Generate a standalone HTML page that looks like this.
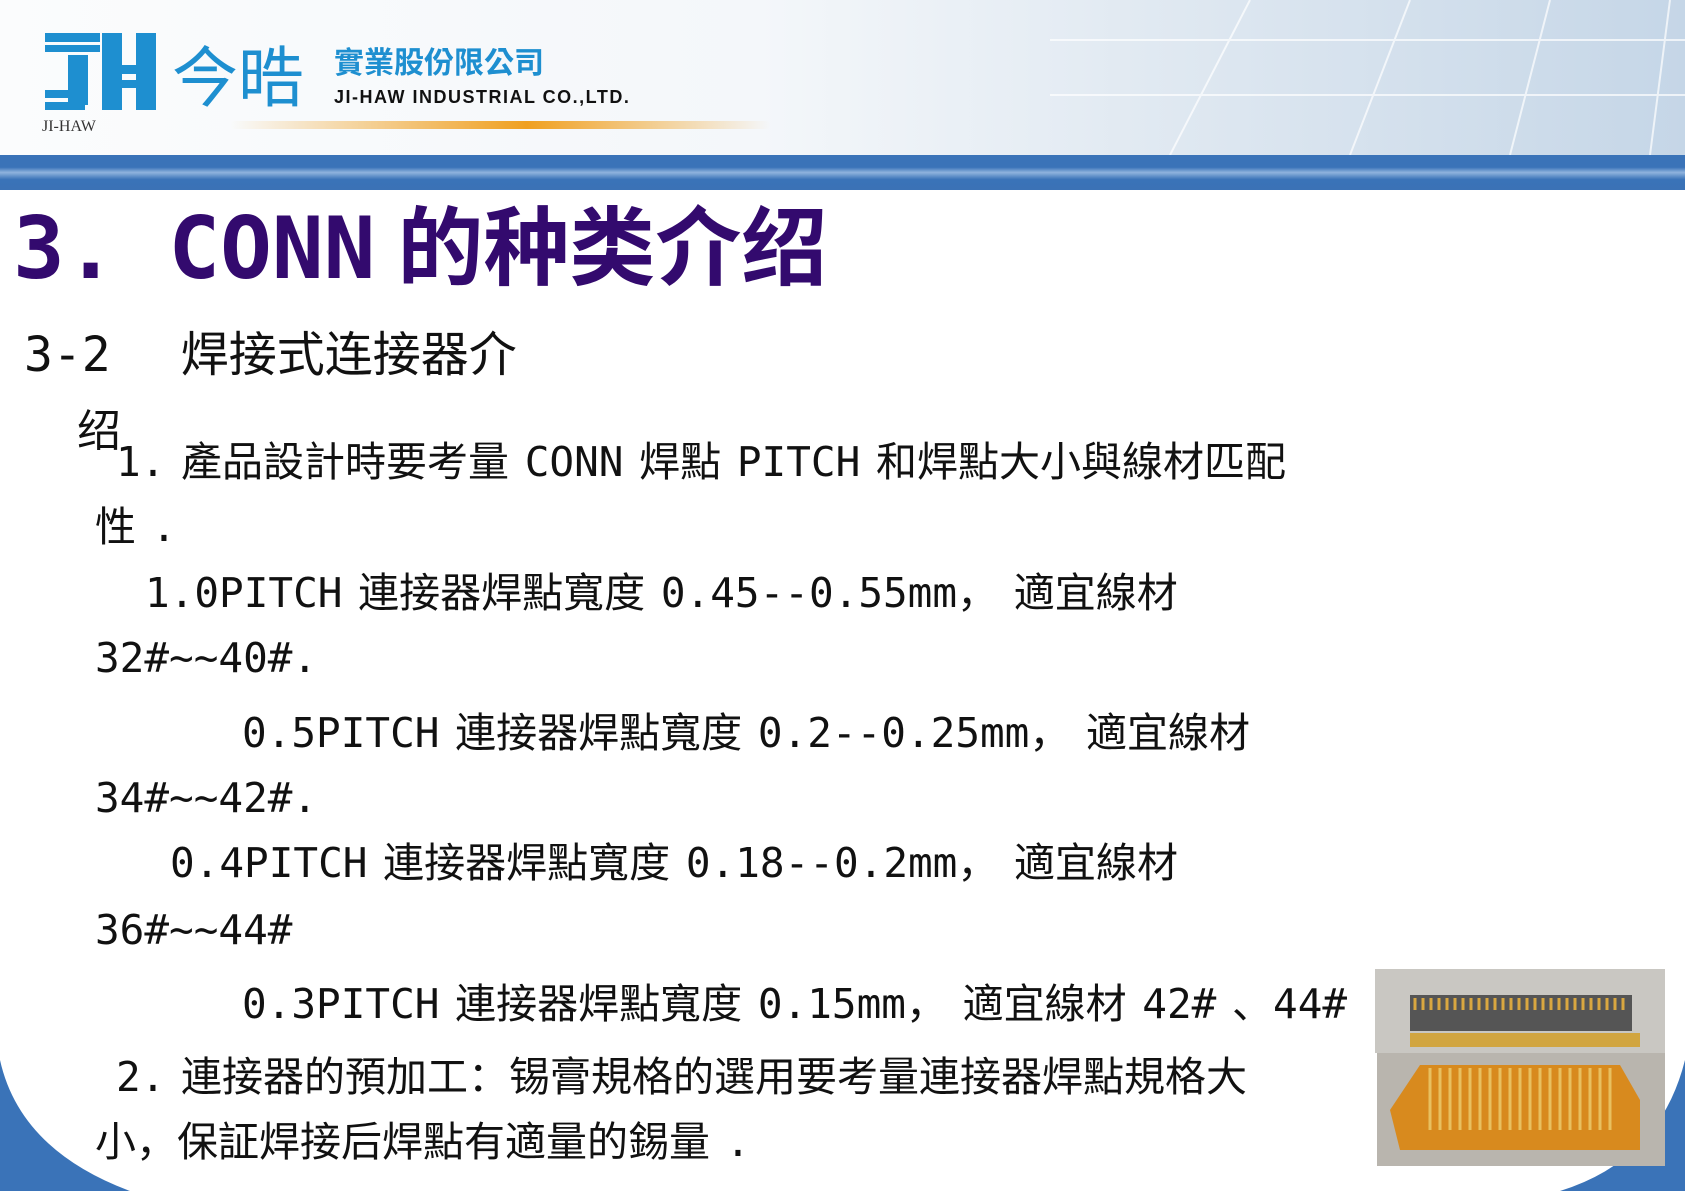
<!DOCTYPE html>
<html><head><meta charset="utf-8"><style>
body{margin:0;width:1685px;height:1191px;position:relative;overflow:hidden;background:#fff;font-family:"DejaVu Sans Mono","Noto Sans CJK SC",monospace;}
.t{position:absolute;white-space:nowrap;color:#111;font-size:41px;line-height:41px;word-spacing:-9px;}
</style></head><body>
<div style="position:absolute;left:0;top:0;width:1685px;height:155px;background:linear-gradient(90deg,#fbfcfd 0%,#f4f7fa 45%,#dfe8f1 70%,#c5d6e7 100%)"></div>
<svg style="position:absolute;left:1050px;top:0" width="635" height="155"><g stroke="#fff" stroke-width="2" opacity=".7" fill="none"><path d="M120 155L200 0M300 155L360 0M460 155L500 0M600 155L620 0M0 40H635M0 95H635"/></g></svg>
<div style="position:absolute;left:0;top:155px;width:1685px;height:35px;background:linear-gradient(180deg,#3a73b8 0%,#3a73b8 35%,#8fb3dd 50%,#3a73b8 70%,#3b72b6 100%)"></div>
<div style="position:absolute;left:230px;top:121px;width:540px;height:8px;border-radius:4px;background:linear-gradient(90deg,rgba(240,160,40,0),#f0a020 55%,rgba(240,160,40,0))"></div>
<svg style="position:absolute;left:40px;top:30px" width="125" height="105">
<g fill="#1e8fd0"><rect x="5" y="3" width="55" height="9"/><rect x="5" y="15" width="55" height="7"/><rect x="28" y="25" width="20" height="50"/><rect x="5" y="60" width="43" height="8"/><rect x="5" y="72" width="40" height="8"/>
<rect x="62" y="3" width="20" height="77"/><rect x="96" y="3" width="20" height="77"/><rect x="62" y="35" width="54" height="9"/><rect x="62" y="50" width="54" height="8"/></g>
<text x="2" y="101" font-family="Liberation Serif" font-size="16" fill="#333">JI-HAW</text></svg>
<div style="position:absolute;left:172px;top:40px;font-family:'Noto Sans CJK TC',sans-serif;font-size:66px;line-height:66px;color:#1e8fd0">今晧</div>
<div style="position:absolute;left:334px;top:44px;font-family:'Noto Sans CJK TC',sans-serif;font-size:30px;line-height:32px;color:#1e8fd0;font-weight:bold">實業股份限公司</div>
<div style="position:absolute;left:334px;top:87px;font-family:'Liberation Sans',sans-serif;font-size:18px;font-weight:bold;letter-spacing:1.5px;color:#111">JI-HAW INDUSTRIAL CO.,LTD.</div>

<div class="t" style="left:13px;top:206px;font-size:86px;line-height:86px;font-weight:bold;color:#330a6e;word-spacing:0">3. CONN<span style="margin-left:22px">的种类介绍</span></div>
<div class="t" style="left:24px;top:331px;font-size:48px;line-height:48px;word-spacing:0">3-2<span style="margin-left:70px">焊接式连接器介</span></div>
<div class="t" style="left:77px;top:410px;font-size:44px;line-height:44px">绍</div>
<div class="t" style="left:116px;top:442px">1. 產品設計時要考量 CONN 焊點 PITCH 和焊點大小與線材匹配</div>
<div class="t" style="left:95px;top:507px">性 .</div>
<div class="t" style="left:145px;top:573px">1.0PITCH 連接器焊點寬度 0.45--0.55mm， 適宜線材</div>
<div class="t" style="left:95px;top:638px">32#~~40#.</div>
<div class="t" style="left:242px;top:713px">0.5PITCH 連接器焊點寬度 0.2--0.25mm， 適宜線材</div>
<div class="t" style="left:95px;top:778px">34#~~42#.</div>
<div class="t" style="left:170px;top:843px">0.4PITCH 連接器焊點寬度 0.18--0.2mm， 適宜線材</div>
<div class="t" style="left:95px;top:910px">36#~~44#</div>
<div class="t" style="left:242px;top:984px">0.3PITCH 連接器焊點寬度 0.15mm， 適宜線材 42# 、44#</div>
<div class="t" style="left:116px;top:1057px">2. 連接器的預加工：锡膏規格的選用要考量連接器焊點規格大</div>
<div class="t" style="left:95px;top:1122px">小，保証焊接后焊點有適量的錫量 .</div>

<svg style="position:absolute;left:0;top:0" width="1685" height="1191">
<path d="M0 1060 Q20 1150 130 1191 L0 1191Z" fill="#3a73b8"/>
<path d="M1685 1060 Q1660 1160 1560 1191 L1685 1191Z" fill="#3a73b8"/>
<rect x="1375" y="969" width="290" height="84" fill="#c9c7c2"/>
<rect x="1410" y="995" width="222" height="36" fill="#555"/>
<g stroke="#d9a740" stroke-width="3"><path d="M1415 998V1010M1423 998V1010M1431 998V1010M1439 998V1010M1447 998V1010M1455 998V1010M1463 998V1010M1471 998V1010M1479 998V1010M1487 998V1010M1495 998V1010M1503 998V1010M1511 998V1010M1519 998V1010M1527 998V1010M1535 998V1010M1543 998V1010M1551 998V1010M1559 998V1010M1567 998V1010M1575 998V1010M1583 998V1010M1591 998V1010M1599 998V1010M1607 998V1010M1615 998V1010M1623 998V1010"/></g>
<rect x="1410" y="1033" width="230" height="14" fill="#d1a540"/>
<rect x="1377" y="1053" width="288" height="113" fill="#b9b5ae"/>
<path d="M1420 1065 H1620 L1640 1100 V1150 H1400 L1390 1110Z" fill="#d88a1e"/>
<g stroke="#e8c060" stroke-width="3"><path d="M1430 1068V1130M1440 1068V1130M1450 1068V1130M1460 1068V1130M1470 1068V1130M1480 1068V1130M1490 1068V1130M1500 1068V1130M1510 1068V1130M1520 1068V1130M1530 1068V1130M1540 1068V1130M1550 1068V1130M1560 1068V1130M1570 1068V1130M1580 1068V1130M1590 1068V1130M1600 1068V1130M1610 1068V1130"/></g>
</svg>
</body></html>
